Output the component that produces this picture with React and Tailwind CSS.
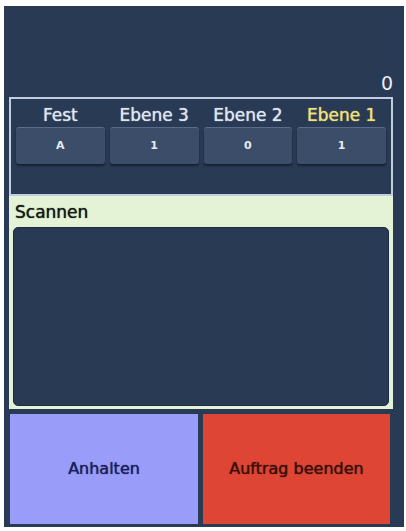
const levels = [
  { label: "Fest", value: "A" },
  { label: "Ebene 3", value: "1" },
  { label: "Ebene 2", value: "0" },
  { label: "Ebene 1", value: "1", active: true },
];

const font = { fontFamily: '"DejaVu Sans", Verdana, sans-serif' };

export default function App() {
  return (
    <div className="w-[406px] h-[531px] bg-white pt-[6px] pl-[4px]" style={font}>
      <div className="w-[400px] h-[521px] bg-[#293a55] flex flex-col">
        {/* counter */}
        <div className="h-[91px] flex items-end justify-end pr-[11px] pb-[4px]">
          <span className="text-[19px] leading-none text-[#e8ecf4]">0</span>
        </div>

        {/* level selector */}
        <div className="ml-[5px] w-[384px] h-[99px] border-2 border-[#c3cde0] pt-[6px] px-[5px]">
          <div className="grid grid-cols-4 gap-[5px]">
            {levels.map((l) => (
              <div key={l.label} className="flex flex-col items-center">
                <span
                  className={
                    "text-[17px] leading-[20px] [text-shadow:0_0_1px_currentColor] " +
                    (l.active ? "text-[#f0e07a]" : "text-[#dfe5ef]")
                  }
                >
                  {l.label}
                </span>
                <div className="mt-[2px] w-full h-[37px] rounded-[3px] bg-[#3b4d69] border-t border-[#5a6c88] shadow-[0_2px_2px_rgba(0,0,0,0.45)] flex items-center justify-center">
                  <span className="text-[11px] font-bold text-[#e6eaf2]">{l.value}</span>
                </div>
              </div>
            ))}
          </div>
        </div>

        {/* scan area */}
        <div className="ml-[5px] w-[384px] h-[213px] bg-[#e4f3d6] px-[4px] pb-[3px] flex flex-col">
          <div className="h-[31px] flex items-center pl-[2px] pt-[2px]">
            <span className="text-[17px] text-[#151a15] [text-shadow:0_0_1px_currentColor]">Scannen</span>
          </div>
          <div className="flex-1 rounded-[5px] bg-[#293a55] border border-[#1d2a40]" />
        </div>

        {/* actions */}
        <div className="mt-[5px] ml-[6px] w-[380px] h-[110px] flex gap-[5px]">
          <button className="w-[188px] h-full bg-[#9a9cf9] text-[16px] text-[#1b2058] [text-shadow:0_0_1px_currentColor]">
            Anhalten
          </button>
          <button className="flex-1 h-full bg-[#de4535] text-[16px] text-[#3a1009] [text-shadow:0_0_1px_currentColor]">
            Auftrag beenden
          </button>
        </div>
      </div>
    </div>
  );
}
